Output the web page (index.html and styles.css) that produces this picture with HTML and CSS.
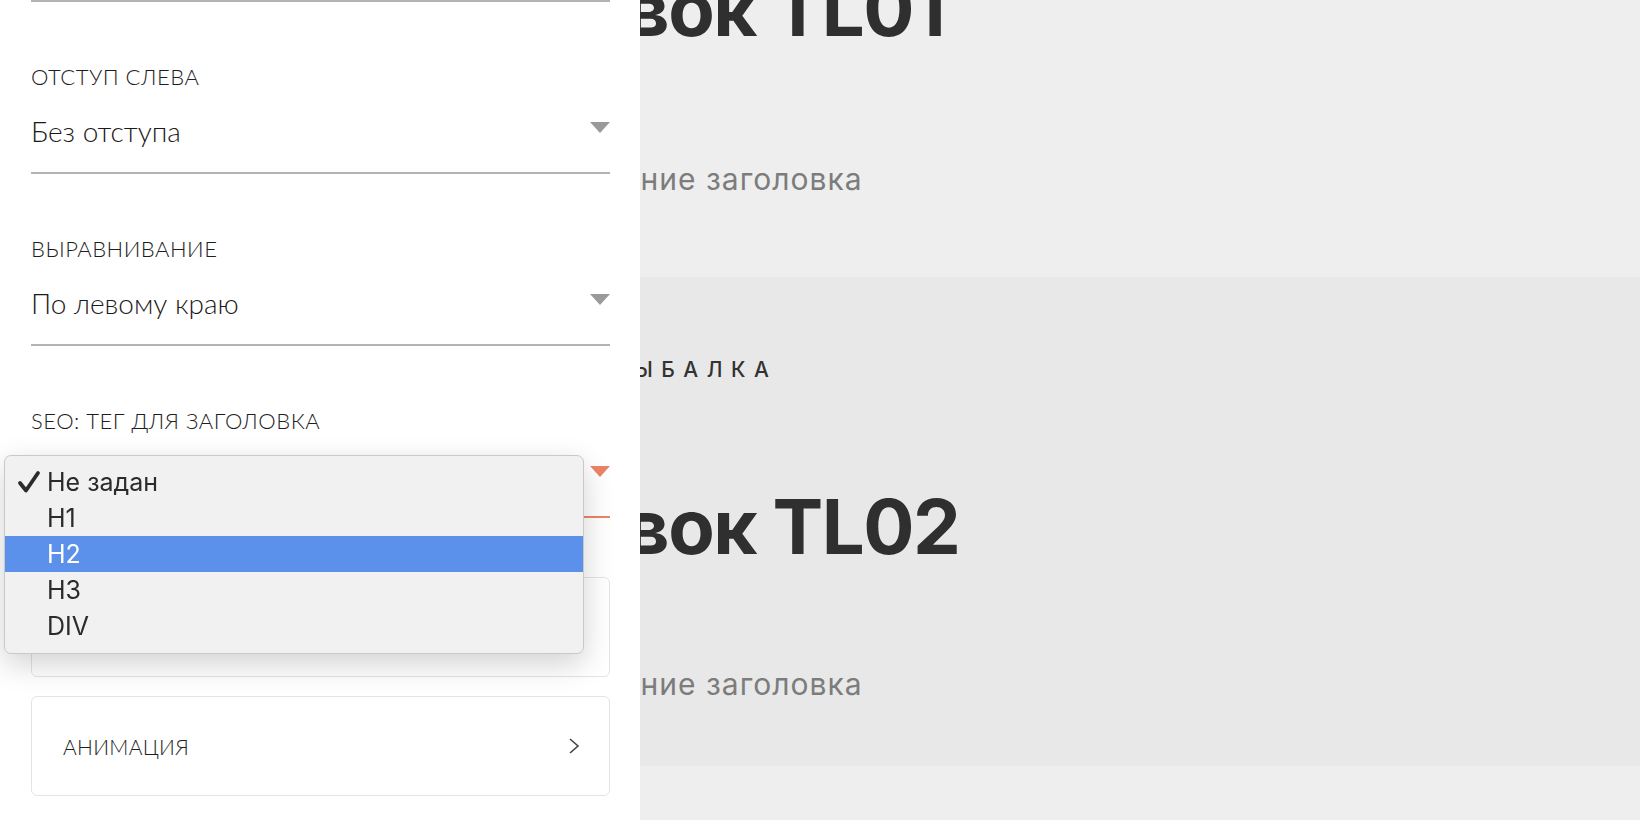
FILE: index.html
```html
<!DOCTYPE html>
<html lang="ru">
<head>
<meta charset="utf-8">
<title>Редактор блока</title>
<link rel="stylesheet" href="styles.css">
</head>
<body>
<main class="page">
  <section class="block block--tl01">
    <div class="block__inner">
      <h2 class="block__title">Заголовок TL01</h2>
      <p class="block__descr">Описание заголовка</p>
    </div>
  </section>
  <section class="block block--tl02">
    <div class="block__inner">
      <div class="block__uptitle">РЫБАЛКА</div>
      <h2 class="block__title">Заголовок TL02</h2>
      <p class="block__descr">Описание заголовка</p>
    </div>
  </section>
  <section class="block block--next"></section>
</main>

<aside class="panel">
  <div class="field field--prev"></div>
  <div class="field">
    <div class="field__label">Отступ слева</div>
    <div class="field__select">
      <span class="field__value">Без отступа</span>
      <span class="field__arrow"></span>
    </div>
  </div>
  <div class="field">
    <div class="field__label">Выравнивание</div>
    <div class="field__select">
      <span class="field__value">По левому краю</span>
      <span class="field__arrow"></span>
    </div>
  </div>
  <div class="field field--active">
    <div class="field__label">SEO: тег для заголовка</div>
    <div class="field__select">
      <span class="field__value"></span>
      <span class="field__arrow"></span>
    </div>
  </div>
  <div class="card card--first"></div>
  <div class="card">
    <span class="card__title">Анимация</span>
    <svg class="card__chevron" width="12" height="20" viewBox="0 0 12 20"><polyline points="2,3 10,10 2,17" fill="none" stroke="#444" stroke-width="1.6"/></svg>
  </div>
</aside>

<ul class="menu">
  <li class="menu__item menu__item--checked">
    <svg class="menu__check" width="24" height="24" viewBox="0 0 24 24"><path d="M3 13 L9 20.5 L21 3" fill="none" stroke="#2b2b2b" stroke-width="3.8" stroke-linecap="round" stroke-linejoin="round"/></svg>
    Не задан
  </li>
  <li class="menu__item">H1</li>
  <li class="menu__item menu__item--hover">H2</li>
  <li class="menu__item">H3</li>
  <li class="menu__item">DIV</li>
</ul>
</body>
</html>
```

FILE: styles.css
```css
* { box-sizing: border-box; }

html, body {
  margin: 0;
  padding: 0;
  height: 100%;
  overflow: hidden;
}

body {
  background: #eeeeee;
  font-family: "Lato", "Noto Sans", sans-serif;
  color: #222;
}

/* ---------- page canvas (scrolled) ---------- */
.page {
  margin-top: -132px;
}

.block {
  background: #eeeeee;
}

.block__inner {
  padding-left: 370px;
}

.block--tl01 {
  padding: 100px 0 77px;
}

.block--tl02 {
  background: #e8e8e8;
  padding: 81px 0 61px;
}

.block--next {
  height: 200px;
}

.block__uptitle {
  font-family: "Inter", sans-serif;
  font-weight: 500;
  font-size: 21px;
  line-height: 24px;
  letter-spacing: 8.5px;
  color: #333;
  margin-left: 242px;
  margin-bottom: 104px;
}

.block__title {
  margin: 0;
  font-family: "Inter", sans-serif;
  font-weight: 700;
  font-size: 76px;
  line-height: 80px;
  letter-spacing: -1.5px;
  color: #2f2f2f;
}

.block__descr {
  margin: 0 0 0 173px;
  font-family: "Inter", sans-serif;
  font-weight: 400;
  font-size: 30px;
  line-height: 42px;
  letter-spacing: 1px;
  color: #7c7c7c;
}

.block--tl01 .block__descr { margin-top: 110px; }
.block--tl02 .block__descr { margin-top: 97px; }

/* ---------- side panel ---------- */
.panel {
  position: fixed;
  left: 0;
  top: 0;
  width: 640px;
  height: 100%;
  background: #ffffff;
  padding: 0 30px 0 31px;
}

.field {
  padding: 63px 0 21px;
  border-bottom: 2px solid #b3b3b3;
}

.field--prev {
  padding: 0;
}

.field--active {
  border-bottom-color: #eb8466;
}

.field__label {
  font-size: 22px;
  line-height: 24px;
  font-weight: 300;
  letter-spacing: 0.5px;
  text-transform: uppercase;
  color: #1e1e1e;
}

.field__select {
  margin-top: 22px;
  height: 40px;
  display: flex;
  justify-content: space-between;
  align-items: flex-start;
}

.field__value {
  font-size: 28px;
  line-height: 40px;
  font-weight: 300;
  color: #1a1a1a;
}

.field__arrow {
  margin-top: 11px;
  width: 0;
  height: 0;
  border-left: 10px solid transparent;
  border-right: 10px solid transparent;
  border-top: 11px solid #9a9a9a;
}

.field--active .field__arrow {
  border-top-color: #eb8466;
}

.card {
  height: 100px;
  border: 1px solid #e4e4e4;
  border-radius: 6px;
  display: flex;
  align-items: center;
  justify-content: space-between;
  padding: 0 29px 0 31px;
  margin-top: 19px;
}

.card--first {
  margin-top: 59px;
}

.card__title {
  font-size: 21px;
  font-weight: 300;
  letter-spacing: 0.3px;
  text-transform: uppercase;
  color: #1e1e1e;
}

/* ---------- native select menu ---------- */
.menu {
  position: absolute;
  left: 4px;
  top: 455px;
  width: 580px;
  margin: 0;
  padding: 8px 0 9px;
  list-style: none;
  background: #f1f1f1;
  border: 1px solid #c9c9c9;
  border-radius: 7px;
  box-shadow: 0 10px 30px rgba(0, 0, 0, 0.18);
  font-family: "Inter", "Roboto", sans-serif;
  font-size: 25px;
  color: #2b2b2b;
}

.menu__item {
  position: relative;
  height: 36px;
  line-height: 36px;
  padding-left: 42px;
}

.menu__item--hover {
  background: #5b91ea;
  color: #ffffff;
}

.menu__check {
  position: absolute;
  left: 12px;
  top: 6px;
}
```
